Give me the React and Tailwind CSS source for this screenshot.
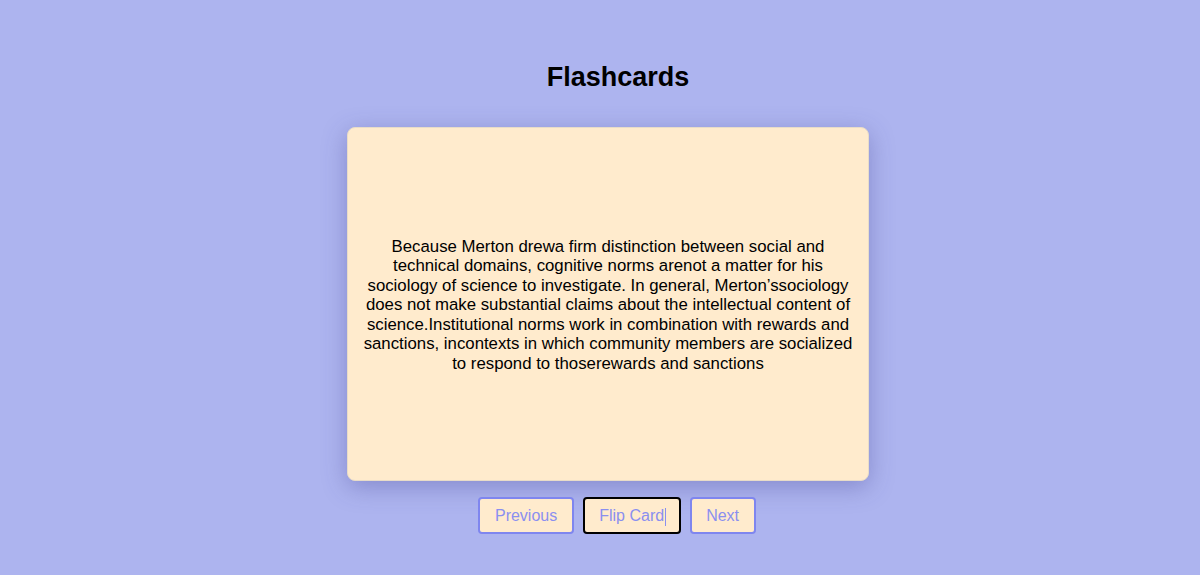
import React, { useState } from 'react';

const TEXT =
  'Because Merton drewa firm distinction between social and technical domains, cognitive norms arenot a matter for his sociology of science to investigate. In general, Merton\u2019ssociology does not make substantial claims about the intellectual content of science.Institutional norms work in combination with rewards and sanctions, incontexts in which community members are socialized to respond to thoserewards and sanctions';

export default function App() {
  const [flipped, setFlipped] = useState(false);
  const btn =
    'relative bg-[#ffebcd] border-2 border-[#7f86ef] rounded-[4px] px-[14.5px] h-[37px] text-[16px] text-[#8a8ff0] leading-none';
  return (
    <div className="min-h-[575px] bg-[#adb4ef] flex flex-col items-center font-['Liberation_Sans',Arial,sans-serif]">
      <h1 className="mt-[60px] text-[27px] font-bold text-black leading-[34px] translate-x-[18px]">Flashcards</h1>
      <div className="mt-[33px] w-[522px] h-[354px] bg-[#ffebcd] rounded-[8px] shadow-[0_6px_24px_rgba(60,60,140,0.35)] border border-[#e8dcc8] flex items-center justify-center px-[13px] translate-x-[8px]">
        <p className="text-[16.8px] leading-[19.5px] text-black text-center translate-y-[1px]">{flipped ? TEXT : TEXT}</p>
      </div>
      <div className="mt-[16px] flex gap-[9px] translate-x-[17px]">
        <button className={btn}>Previous</button>
        <button className={btn + ' !border-black'} onClick={() => setFlipped(!flipped)}>
          Flip Card
          <span className="absolute right-[16px] top-[9px] w-px h-[18px] bg-[#8a8ff0] translate-x-[3px]"></span>
        </button>
        <button className={btn}>Next</button>
      </div>
    </div>
  );
}
